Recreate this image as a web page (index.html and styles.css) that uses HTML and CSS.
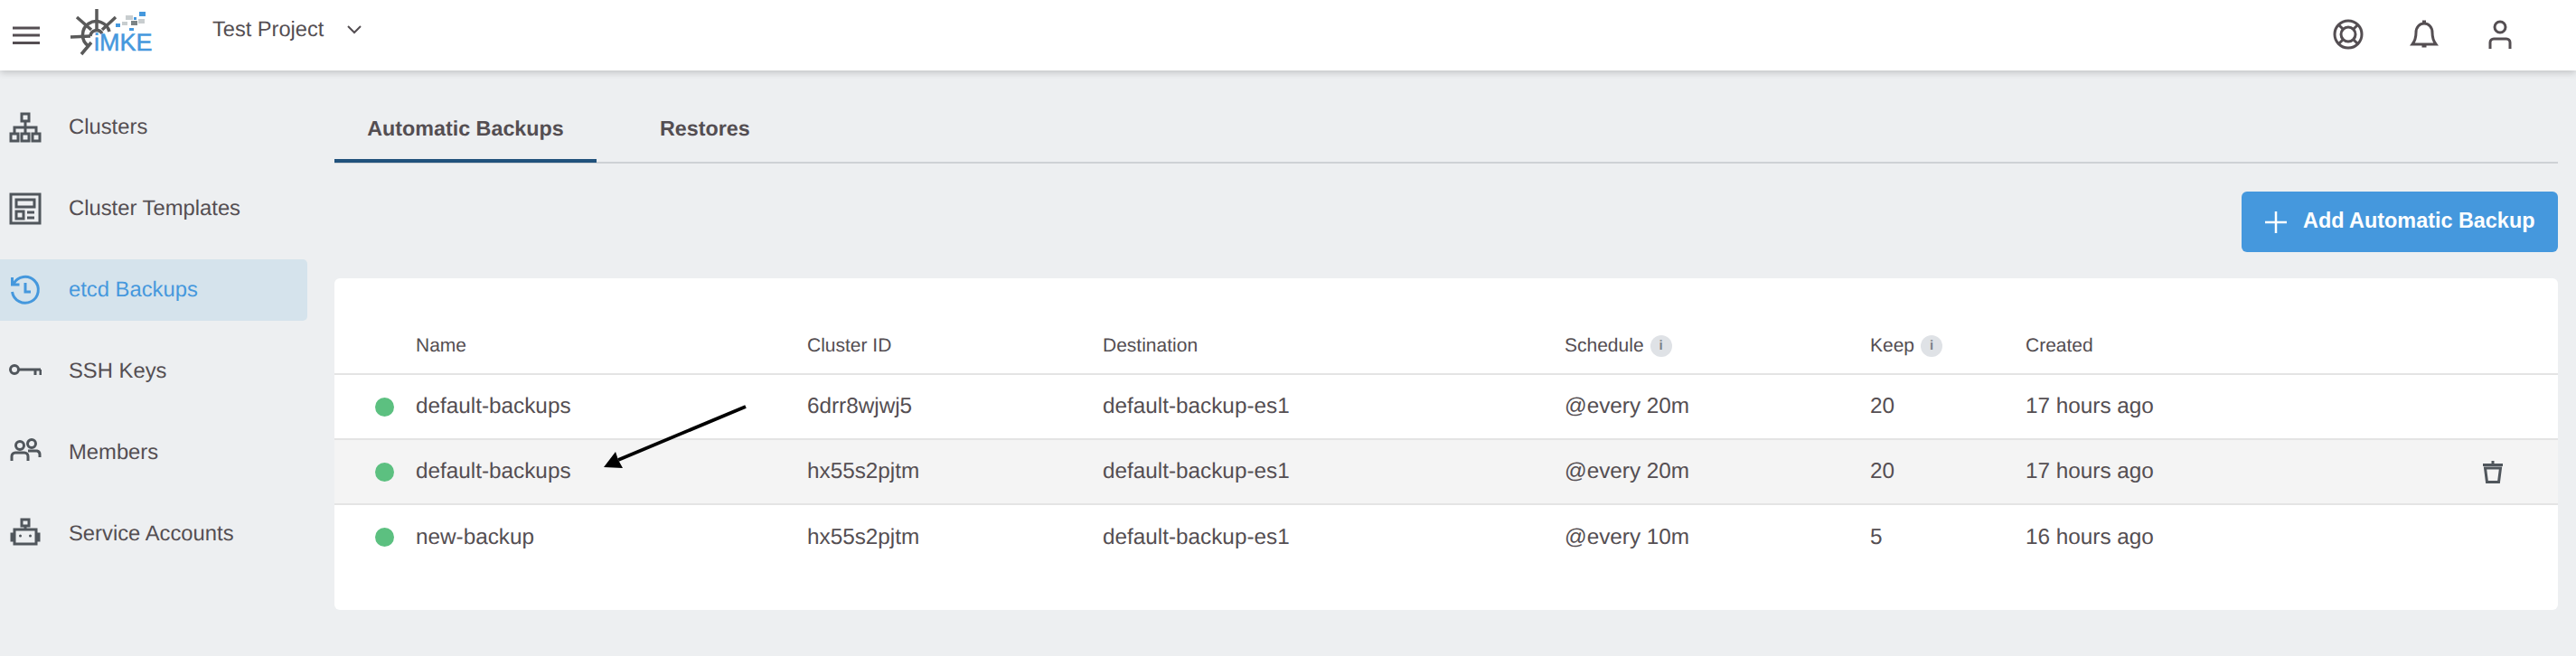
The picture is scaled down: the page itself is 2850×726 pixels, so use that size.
FILE: index.html
```html
<!DOCTYPE html>
<html lang="en">
<head>
    <meta charset="UTF-8">
    <title>etcd Backups</title>
    <link rel="stylesheet" href="styles.css">
</head>
<body>

    <header class="topbar">
        <svg class="menu-icon" viewBox="0 0 30 20"><path d="M0 2h30M0 10h30M0 18.500h30"/></svg>
        <svg class="logo" viewBox="0 0 100 56">
            <g class="logo-wheel">
                <path d="M22 46A15 15 0 1 1 45 30"/>
                <path d="M31 5V28M2 36l22-1M9 14l16 14M52 14L37 28M14 55l11-13"/>
                <path class="logo-hub" d="M24 35a7 7 0 0 1 13-3"/>
            </g>
            <rect class="px-blue" x="78" y="8" width="7" height="5"/>
            <rect class="px-light" x="63" y="12" width="8" height="5"/>
            <rect class="px-blue" x="72" y="14" width="3" height="3"/>
            <rect class="px-light" x="77" y="16" width="7" height="5"/>
            <rect class="px-dark" x="69" y="18" width="7" height="5"/>
            <rect class="px-light" x="59" y="19" width="6" height="4"/>
            <rect class="px-blue" x="52" y="21" width="5" height="4"/>
            <rect class="px-blue" x="67" y="26" width="5" height="3"/>
            <text class="logo-text" x="28" y="51">iMKE</text>
        </svg>
        <div class="project-select">
            <span>Test Project</span>
            <svg viewBox="0 0 16 10"><path d="M1 1l7 7 7-7"/></svg>
        </div>
        <div class="topbar-icons">
            <svg viewBox="0 0 34 34"><circle cx="17" cy="17" r="15"/><circle cx="17" cy="17" r="8"/><path d="M6.500 6.500l5 5M27.500 6.500l-5 5M6.500 27.500l5-5M27.500 27.500l-5-5"/></svg>
            <svg viewBox="0 0 34 34"><path d="M4 28c3-4 4-7 4-13 0-6 4-10 9-10s9 4 9 10c0 6 1 9 4 13zM15 3h4M14.500 30h5"/></svg>
            <svg viewBox="0 0 34 34"><circle cx="17" cy="9" r="6"/><path d="M6 33V26a4 4 0 0 1 4-4h14a4 4 0 0 1 4 4v7"/></svg>
        </div>
    </header>

    <div class="layout">
        <nav class="sidebar">
            <a class="nav-item">
                <svg viewBox="0 0 36 36"><path d="M14 3h8v8h-8zM2 25h8v8H2zM14 25h8v8h-8zM26 25h8v8h-8zM18 11v14M6 25v-7h24v7"/></svg>
                Clusters
            </a>
            <a class="nav-item">
                <svg viewBox="0 0 36 36"><path d="M2 2h32v32H2zM8 8h20v8H8zM8 21h8v8H8zM20 22h8M20 28h8"/></svg>
                Cluster Templates
            </a>
            <a class="nav-item active">
                <svg viewBox="0 0 36 36"><path d="M5 11A14.500 14.500 0 1 1 3.500 20M3.500 4v8h8M18 10v10h6"/></svg>
                etcd Backups
            </a>
            <a class="nav-item">
                <svg viewBox="0 0 36 36"><circle cx="6" cy="16" r="4.500"/><path d="M10.500 16H35M29 16v6M35 16v6"/></svg>
                SSH Keys
            </a>
            <a class="nav-item">
                <svg viewBox="0 0 36 36"><circle cx="12" cy="10" r="4.500"/><circle cx="25" cy="8" r="4.500"/><path d="M3 27v-5a4 4 0 0 1 4-4h10a4 4 0 0 1 4 4v5M21 16h10a4 4 0 0 1 3 4v3"/></svg>
                Members
            </a>
            <a class="nav-item">
                <svg viewBox="0 0 36 36"><path d="M14 2h8v7h-8zM18 9v4M6 13h24v16H6zM6 18H3v7h3M30 18h3v7h-3"/><circle class="fill-dot" cx="12.500" cy="20" r="1.500"/><circle class="fill-dot" cx="23.500" cy="20" r="1.500"/></svg>
                Service Accounts
            </a>
        </nav>

        <main class="content">
            <div class="tabs">
                <div class="tab selected">Automatic Backups</div>
                <div class="tab">Restores</div>
            </div>

            <div class="toolbar">
                <button class="btn-add">
                    <svg viewBox="0 0 24 24"><path d="M12 0v24M0 12h24"/></svg>
                    <span class="btn-label">Add Automatic Backup</span>
                </button>
            </div>

            <div class="card">
                <table>
                    <colgroup>
                        <col class="col-status">
                        <col class="col-name">
                        <col class="col-cluster">
                        <col class="col-dest">
                        <col class="col-schedule">
                        <col class="col-keep">
                        <col class="col-created">
                        <col>
                    </colgroup>
                    <thead>
                        <tr>
                            <th></th>
                            <th>Name</th>
                            <th>Cluster ID</th>
                            <th>Destination</th>
                            <th><div class="th-info">Schedule <span class="info">i</span></div></th>
                            <th><div class="th-info">Keep <span class="info">i</span></div></th>
                            <th>Created</th>
                            <th></th>
                        </tr>
                    </thead>
                    <tbody>
                        <tr>
                            <td><span class="dot"></span></td>
                            <td>default-backups</td>
                            <td>6drr8wjwj5</td>
                            <td>default-backup-es1</td>
                            <td>@every 20m</td>
                            <td>20</td>
                            <td>17 hours ago</td>
                            <td></td>
                        </tr>
                        <tr class="hovered">
                            <td><span class="dot"></span></td>
                            <td>default-backups</td>
                            <td>hx55s2pjtm</td>
                            <td>default-backup-es1</td>
                            <td>@every 20m</td>
                            <td>20</td>
                            <td>17 hours ago</td>
                            <td>
                                <svg class="trash" viewBox="0 0 24 26"><path d="M1 5.500h22M12 1v4M3.500 9l2 15.500h13l2-15.500z"/></svg>
                            </td>
                        </tr>
                        <tr>
                            <td><span class="dot"></span></td>
                            <td>new-backup</td>
                            <td>hx55s2pjtm</td>
                            <td>default-backup-es1</td>
                            <td>@every 10m</td>
                            <td>5</td>
                            <td>16 hours ago</td>
                            <td></td>
                        </tr>
                    </tbody>
                </table>

                <svg class="arrow" viewBox="0 0 170 80">
                    <path class="arrow-line" d="M160 4L19 63"/>
                    <path class="arrow-head" d="M3 71L16 54 19 63 24 72z"/>
                </svg>
            </div>
        </main>
    </div>

</body>
</html>
```

FILE: styles.css
```css
* {
    box-sizing: border-box;
}

body {
    font-family: "Liberation Sans", Arial, sans-serif;
    background-color: #edeff1;
    color: #544e52;
    margin: 0;
    height: 726px;
    overflow: hidden;
    text-rendering: geometricPrecision;
}

svg {
    fill: none;
    stroke: #50565c;
    stroke-width: 3;
}

.topbar {
    display: flex;
    align-items: center;
    height: 78px;
    background-color: #fff;
    box-shadow: 0 2px 8px rgba(0, 0, 0, 0.2);
    position: relative;
    padding-left: 14px;
    padding-right: 67px;
}

.menu-icon {
    width: 30px;
    height: 20px;
    stroke: #544e52;
}

.logo {
    width: 100px;
    height: 56px;
    margin-left: 32px;
    margin-top: -12px;
    overflow: visible;
}

.logo-wheel path {
    stroke: #5a5a5a;
    stroke-width: 3.500;
}

.logo-text {
    font-size: 27px;
    fill: #4598dd;
    stroke: #4598dd;
    stroke-width: 0.500;
}

.px-blue {
    fill: #4598dd;
    stroke: none;
}

.px-light {
    fill: #c8cdcf;
    stroke: none;
}

.px-dark {
    fill: #7c8486;
    stroke: none;
}

.project-select {
    display: flex;
    align-items: center;
    gap: 26px;
    margin-left: 59px;
    margin-top: -12px;
    font-size: 23.600px;
}

.project-select svg {
    width: 16px;
    height: 10px;
    stroke: #544e52;
    stroke-width: 2;
}

.topbar-icons {
    display: flex;
    gap: 50px;
    margin-left: auto;
    margin-top: -3px;
}

.topbar-icons svg {
    width: 34px;
    height: 34px;
    stroke: #544e52;
}

.layout {
    display: flex;
    height: 648px;
}

.sidebar {
    width: 340px;
    flex-shrink: 0;
    padding-top: 29px;
    display: flex;
    flex-direction: column;
    gap: 22px;
}

.nav-item {
    display: flex;
    align-items: center;
    height: 68px;
    padding-left: 10px;
    gap: 30px;
    font-size: 23.800px;
    border-radius: 0 5px 5px 0;
}

.nav-item svg {
    width: 36px;
    height: 36px;
    flex-shrink: 0;
}

.nav-item .fill-dot {
    fill: #50565c;
    stroke: none;
}

.nav-item.active {
    background-color: #d5e3ec;
    color: #4598dd;
}

.nav-item.active svg {
    stroke: #4598dd;
}

.content {
    flex: 1;
    padding: 25px 20px 0 30px;
}

.tabs {
    display: flex;
    gap: 34px;
    height: 78px;
    border-bottom: 2px solid #ced1d5;
}

.tab {
    width: 170px;
    height: 77px;
    line-height: 78px;
    text-align: center;
    font-size: 23.300px;
    font-weight: bold;
}

.tab.selected {
    width: 290px;
    border-bottom: 4px solid #21527c;
}

.tab:last-child {
    width: auto;
    padding: 0 36px;
}

.toolbar {
    display: flex;
    justify-content: flex-end;
    margin-top: 31px;
}

.btn-add {
    display: flex;
    align-items: center;
    gap: 18px;
    width: 350px;
    height: 67px;
    padding-left: 26px;
    border: none;
    border-radius: 6px;
    background-color: #4598dd;
    color: #fff;
    font-family: inherit;
    font-size: 23.400px;
    font-weight: bold;
}

.btn-add svg {
    width: 24px;
    height: 24px;
    stroke: #fff;
    stroke-width: 2.500;
}

.btn-label {
    padding-bottom: 2px;
}

.card {
    position: relative;
    margin-top: 29px;
    height: 367px;
    padding-top: 44px;
    background-color: #fff;
    border-radius: 6px;
}

table {
    width: 100%;
    border-collapse: collapse;
    table-layout: fixed;
}

.col-status { width: 90px; }
.col-name { width: 433px; }
.col-cluster { width: 327px; }
.col-dest { width: 511px; }
.col-schedule { width: 338px; }
.col-keep { width: 172px; }
.col-created { width: 459px; }

th {
    height: 62px;
    padding: 0;
    text-align: left;
    font-size: 21px;
    font-weight: normal;
    border-bottom: 2px solid #e4e4e4;
}

td {
    height: 72px;
    padding: 0;
    font-size: 24.300px;
    border-bottom: 2px solid #e4e4e4;
}

tbody tr:last-child td {
    border-bottom: none;
}

tr.hovered td {
    background-color: #f4f4f4;
}

.dot {
    display: block;
    width: 21px;
    height: 21px;
    margin-left: 45px;
    border-radius: 50%;
    background-color: #5cc080;
}

.th-info {
    display: flex;
    align-items: center;
    gap: 7px;
}

.info {
    width: 24px;
    height: 24px;
    border-radius: 50%;
    background-color: #dfe2e6;
    color: #7b8288;
    font-size: 15px;
    font-weight: bold;
    line-height: 24px;
    text-align: center;
}

.trash {
    display: block;
    width: 24px;
    height: 26px;
    margin-left: 46px;
}

.arrow {
    position: absolute;
    left: 295px;
    top: 138px;
    width: 170px;
    height: 80px;
    overflow: visible;
}

.arrow-line {
    stroke: #000;
    stroke-width: 3.800;
}

.arrow-head {
    fill: #000;
    stroke: none;
}
```
